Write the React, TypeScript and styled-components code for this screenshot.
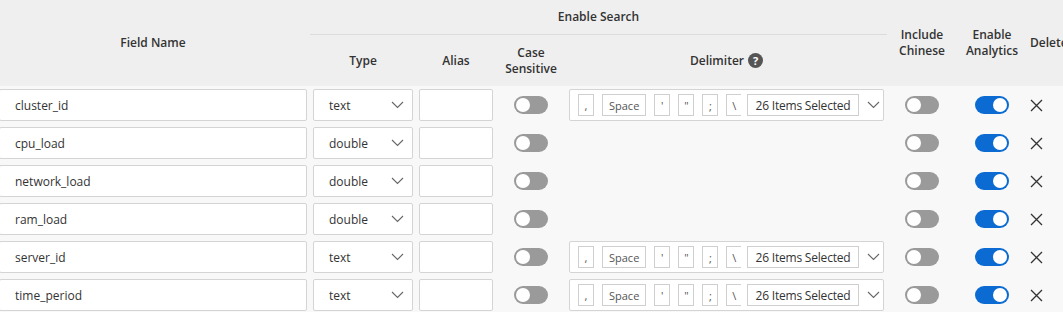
import React from 'react'
import styled, { createGlobalStyle } from 'styled-components'

const GlobalStyle = createGlobalStyle`
  html, body {
    margin: 0;
    padding: 0;
    background: #f8f8f8;
    overflow: hidden;
  }
  body {
    font-family: 'Open Sans', 'Noto Sans', sans-serif;
    color: #333;
  }
`

const COLS = '314px 106px 80px 70px 321px 70px 70px 50px'

const Page = styled.div`
  width: 1063px;
  height: 312px;
  overflow: hidden;
`

const Table = styled.div`
  margin-left: -4px;
  width: 1071px;
`

const Head = styled.div`
  display: grid;
  grid-template-columns: ${COLS};
  grid-template-rows: 35px 51px;
  background: #efefef;
  font-size: 12px;
  font-weight: 600;
  line-height: 16px;
  color: #333;
`

const HeadCell = styled.div<{ $col: string; $row: string; $align?: 'left' | 'center' }>`
  grid-column: ${p => p.$col};
  grid-row: ${p => p.$row};
  display: flex;
  align-items: center;
  justify-content: ${p => (p.$align === 'left' ? 'flex-start' : 'center')};
  text-align: center;
  padding: 0 3px;
  white-space: nowrap;
`

const GroupCell = styled(HeadCell)`
  border-bottom: 1px solid #dcdcdc;
`

const Help = styled.span`
  display: inline-flex;
  align-items: center;
  justify-content: center;
  width: 15px;
  height: 15px;
  margin-left: 4px;
  border-radius: 50%;
  background: #555;
  color: #fff;
  font-size: 11px;
  font-weight: 700;
  line-height: 1;
`

const Row = styled.div`
  display: grid;
  grid-template-columns: ${COLS};
  height: 38px;
  font-size: 12px;
`

const Cell = styled.div<{ $justify?: string }>`
  display: flex;
  align-items: center;
  justify-content: ${p => p.$justify || 'center'};
  padding: 3px 3px;
  box-sizing: border-box;
  min-width: 0;
`

const Box = styled.div`
  flex: 1;
  height: 32px;
  box-sizing: border-box;
  background: #fff;
  border: 1px solid #d4d4d4;
  border-radius: 2px;
  display: flex;
  align-items: center;
  min-width: 0;
`

const FieldBox = styled(Box)`
  padding-left: 15px;
  color: #333;
`

const SelectBox = styled(Box)`
  padding: 0 8px 0 15px;
  justify-content: space-between;
`

const Chevron: React.FC = () => (
  <svg width="13" height="8" viewBox="0 0 13 8" style={{ flexShrink: 0 }}>
    <path d="M1 1 L6.5 6.5 L12 1" fill="none" stroke="#666" strokeWidth="1.1" />
  </svg>
)

const DelimBox = styled(Box)`
  padding: 0 5px 0 8px;
`

const Chips = styled.div`
  display: flex;
  gap: 8px;
  width: 163px;
  overflow: hidden;
  flex-shrink: 0;
`

const Chip = styled.span<{ $wide?: boolean }>`
  flex-shrink: 0;
  display: inline-flex;
  align-items: center;
  justify-content: center;
  height: 22px;
  min-width: 16px;
  padding: 0 ${p => (p.$wide ? '6px' : '0')};
  box-sizing: border-box;
  border: 1px solid #cfcfcf;
  background: #fff;
  font-size: 11px;
  color: #555;
`

const Summary = styled.span`
  flex-shrink: 0;
  display: inline-flex;
  align-items: center;
  justify-content: center;
  width: 112px;
  height: 22px;
  margin: 0 8px 0 6px;
  box-sizing: border-box;
  border: 1px solid #cfcfcf;
  font-size: 12px;
  letter-spacing: -0.2px;
  color: #333;
  white-space: nowrap;
`

const Track = styled.span<{ $on?: boolean }>`
  position: relative;
  display: inline-block;
  width: 34px;
  height: 18px;
  border-radius: 9px;
  background: ${p => (p.$on ? '#0b6bd2' : '#9a9a9a')};
`

const Knob = styled.span<{ $on?: boolean }>`
  position: absolute;
  top: 2px;
  left: ${p => (p.$on ? '18px' : '2px')};
  width: 14px;
  height: 14px;
  border-radius: 50%;
  background: #fff;
`

const Toggle: React.FC<{ on?: boolean }> = ({ on }) => (
  <Track $on={on}>
    <Knob $on={on} />
  </Track>
)

const Close: React.FC = () => (
  <svg width="13" height="13" viewBox="0 0 13 13">
    <path d="M1 1 L12 12 M12 1 L1 12" stroke="#333" strokeWidth="1.3" />
  </svg>
)

interface Field {
  name: string
  type: string
  delim: boolean
}

const fields: Field[] = [
  { name: 'cluster_id', type: 'text', delim: true },
  { name: 'cpu_load', type: 'double', delim: false },
  { name: 'network_load', type: 'double', delim: false },
  { name: 'ram_load', type: 'double', delim: false },
  { name: 'server_id', type: 'text', delim: true },
  { name: 'time_period', type: 'text', delim: true },
]

const delimiters = [',', 'Space', "'", '"', ';', '\\']

const App: React.FC = () => (
  <Page>
    <GlobalStyle />
    <Table>
      <Head>
        <HeadCell $col="1" $row="1 / 3">Field Name</HeadCell>
        <GroupCell $col="2 / 6" $row="1">Enable Search</GroupCell>
        <HeadCell $col="2" $row="2">Type</HeadCell>
        <HeadCell $col="3" $row="2">Alias</HeadCell>
        <HeadCell $col="4" $row="2">Case<br />Sensitive</HeadCell>
        <HeadCell $col="5" $row="2">
          Delimiter<Help>?</Help>
        </HeadCell>
        <HeadCell $col="6" $row="1 / 3">Include<br />Chinese</HeadCell>
        <HeadCell $col="7" $row="1 / 3">Enable<br />Analytics</HeadCell>
        <HeadCell $col="8" $row="1 / 3" $align="left">Delete</HeadCell>
      </Head>
      {fields.map(f => (
        <Row key={f.name}>
          <Cell>
            <FieldBox>{f.name}</FieldBox>
          </Cell>
          <Cell>
            <SelectBox>
              <span>{f.type}</span>
              <Chevron />
            </SelectBox>
          </Cell>
          <Cell>
            <Box />
          </Cell>
          <Cell>
            <Toggle />
          </Cell>
          <Cell>
            {f.delim && (
              <DelimBox>
                <Chips>
                  {delimiters.map(d => (
                    <Chip key={d} $wide={d === 'Space'}>
                      {d}
                    </Chip>
                  ))}
                </Chips>
                <Summary>26 Items Selected</Summary>
                <Chevron />
              </DelimBox>
            )}
          </Cell>
          <Cell>
            <Toggle />
          </Cell>
          <Cell>
            <Toggle on />
          </Cell>
          <Cell $justify="flex-start">
            <Close />
          </Cell>
        </Row>
      ))}
    </Table>
  </Page>
)

export default App
